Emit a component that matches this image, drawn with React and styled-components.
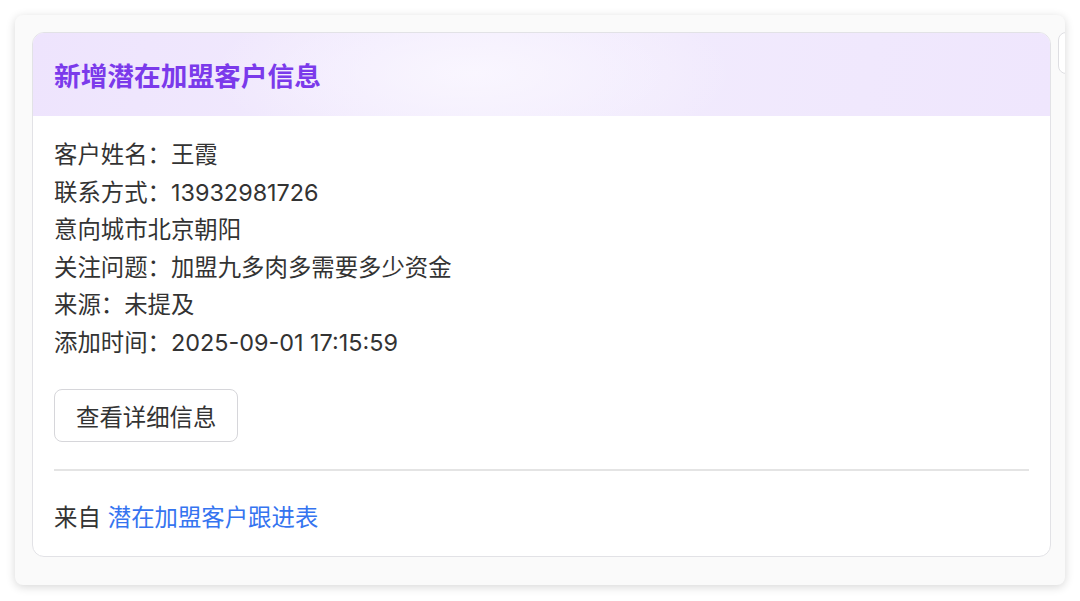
import styled, { createGlobalStyle } from "styled-components";

/* ---------- Global ---------- */

const GlobalStyle = createGlobalStyle`
  html, body {
    margin: 0;
    padding: 0;
    background: #ffffff;
  }

  body {
    font-family: "Inter", "Noto Sans CJK SC", "Noto Sans", sans-serif;
    color: #333333;
  }
`;

/* ---------- Styled Components ---------- */

/* Grey message panel with soft shadow */
const Panel = styled.div`
  margin: 15px;
  width: 1050px;
  height: 570px;
  box-sizing: border-box;
  padding: 17px 0 0 17px;
  display: flex;
  gap: 7px;
  align-items: flex-start;
  overflow: hidden;

  background: #fafafa;
  border-radius: 8px;
  box-shadow: 0 2px 10px rgba(0, 0, 0, 0.16);
`;

/* White card with rounded border */
const Card = styled.section`
  flex: 0 0 1019px;
  box-sizing: border-box;
  background: #ffffff;
  border: 1px solid #e2e2e6;
  border-radius: 12px;
  overflow: hidden;
`;

/* Lavender header */
const Header = styled.header`
  height: 83px;
  display: flex;
  align-items: center;
  padding: 0 21px;
  background:
    radial-gradient(ellipse 260px 90px at 440px 40px, rgba(250, 247, 255, 0.9), transparent),
    linear-gradient(100deg, #eee4fd 0%, #f2ecfd 45%, #efe6fd 100%);
`;

/* Purple title */
const Title = styled.h1`
  margin: 0 0 1px;
  font-size: 26.7px;
  font-weight: 700;
  color: #7b3aeb;
`;

/* Card body */
const Body = styled.div`
  padding: 20px 21px 19px;
`;

/* Field lines */
const Fields = styled.div`
  display: flex;
  flex-direction: column;
`;

const Line = styled.div`
  font-size: 23.4px;
  line-height: 37.5px;
  color: #333333;
  white-space: nowrap;
`;

/* Outline button */
const Button = styled.button`
  margin-top: 28px;
  height: 53px;
  padding: 0 21px;
  background: #ffffff;
  border: 1px solid #d6d6da;
  border-radius: 8px;
  font-family: inherit;
  font-size: 23.4px;
  color: #333333;
  cursor: pointer;
`;

/* Separator line */
const Divider = styled.hr`
  margin: 27px 0 0;
  border: none;
  border-top: 2px solid #e4e4e4;
`;

/* Footer source line */
const Footer = styled.div`
  margin-top: 28px;
  font-size: 23.4px;
  line-height: 37.5px;
  color: #333333;
`;

const Link = styled.a`
  color: #3574f0;
  text-decoration: none;
  margin-left: 7px;
`;

/* Edge of next card peeking out on the right */
const NextCard = styled.div`
  flex: 0 0 40px;
  height: 42px;
  box-sizing: border-box;
  background: #ffffff;
  border: 1px solid #dedee2;
  border-radius: 8px;
`;

/* ---------- Component ---------- */

const fields = [
  "客户姓名：王霞",
  "联系方式：13932981726",
  "意向城市北京朝阳",
  "关注问题：加盟九多肉多需要多少资金",
  "来源：未提及",
  "添加时间：2025-09-01 17:15:59",
];

const App = () => (
  <>
    <GlobalStyle />
    <Panel>
      <Card>
        <Header>
          <Title>新增潜在加盟客户信息</Title>
        </Header>

        <Body>
          <Fields>
            {fields.map((text) => (
              <Line key={text}>{text}</Line>
            ))}
          </Fields>

          <Button>查看详细信息</Button>

          <Divider />

          <Footer>
            来自<Link href="#">潜在加盟客户跟进表</Link>
          </Footer>
        </Body>
      </Card>

      <NextCard />
    </Panel>
  </>
);

export default App;
